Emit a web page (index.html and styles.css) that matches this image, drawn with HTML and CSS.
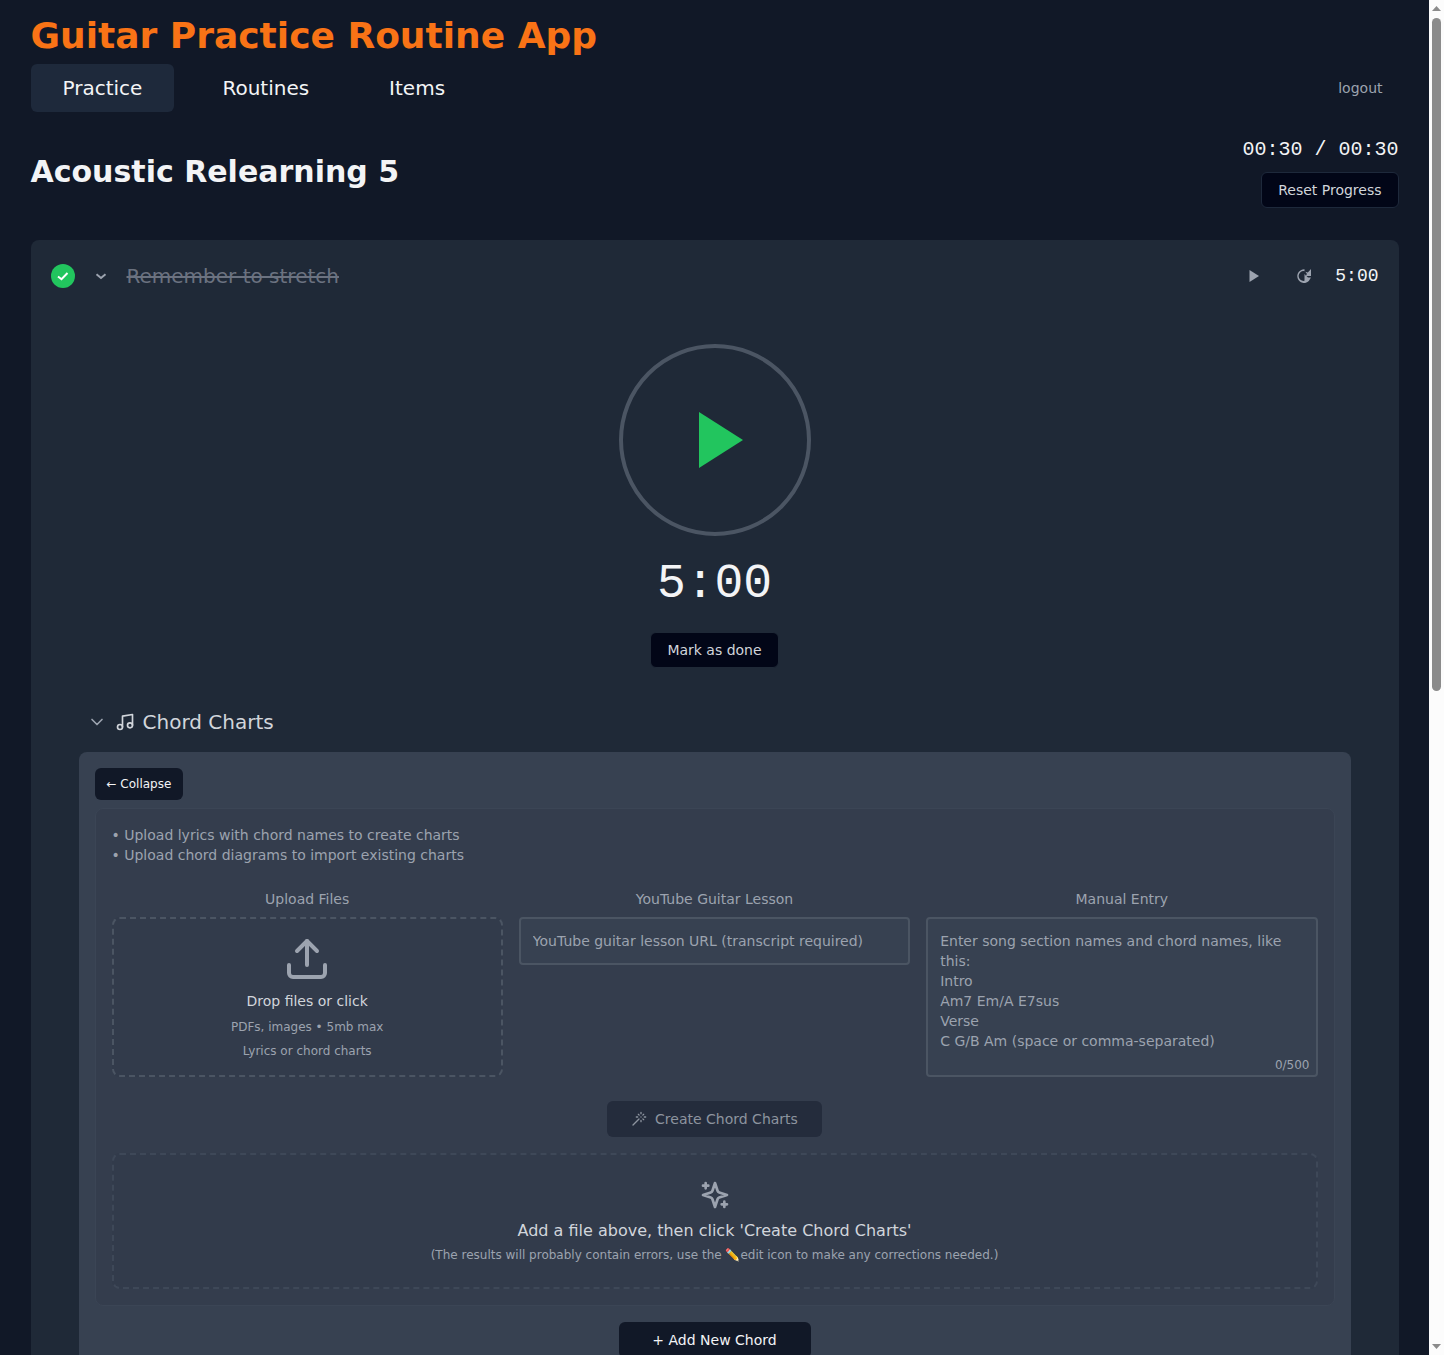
FILE: index.html
```html
<!DOCTYPE html>
<html lang="en">
<head>
<meta charset="utf-8">
<meta name="viewport" content="width=device-width, initial-scale=1">
<title>Guitar Practice Routine App</title>
<link rel="stylesheet" href="styles.css">
</head>
<body>
<div class="scroller">
  <div class="container">
    <header>
      <h1 class="brand">Guitar Practice Routine App</h1>
      <nav class="nav">
        <a class="tab tab-active" href="#practice">Practice</a>
        <a class="tab" href="#routines">Routines</a>
        <a class="tab" href="#items">Items</a>
        <button class="logout" type="button">logout</button>
      </nav>
    </header>

    <main>
      <div class="routine-head">
        <h2 class="routine-title">Acoustic Relearning 5</h2>
        <div class="progress">
          <span class="progress-time">00:30 / 00:30</span>
          <button class="btn btn-dark" type="button">Reset Progress</button>
        </div>
      </div>

      <section class="card">
        <div class="item-row">
          <button class="check" type="button" aria-label="Completed">
            <svg width="16" height="16" viewBox="0 0 16 16" fill="none" stroke="currentColor" stroke-width="2"><path d="M3 8.500 6.500 11.200 12.500 5"/></svg>
          </button>
          <button class="icon-btn" type="button" aria-label="Collapse item">
            <svg width="16" height="16" viewBox="0 0 16 16" fill="none" stroke="currentColor" stroke-width="2"><path d="M3.500 6.300 8 10 12.500 6.300"/></svg>
          </button>
          <h3 class="item-title">Remember to stretch</h3>
          <div class="item-tools">
            <button class="tool" type="button" aria-label="Play">
              <svg width="16" height="16" viewBox="0 0 16 16" fill="currentColor"><path d="M3.500 2v12l9.500-6z"/></svg>
            </button>
            <button class="tool" type="button" aria-label="Reset timer">
              <svg width="16" height="16" viewBox="0 0 16 16" fill="currentColor"><path d="M8.500 1.300A6.800 6.800 0 1 0 12.800 13L15 9.500H12L8.500 6v6.800A4.900 4.900 0 1 1 8.500 3.200zM9.300 3.800 11.800 4.500 15 1v7H9.500l1.500-2z"/></svg>
            </button>
            <span class="item-time">5:00</span>
          </div>
        </div>

        <div class="timer">
          <button class="dial" type="button" aria-label="Start timer">
            <svg width="56" height="56" viewBox="0 0 56 56" fill="currentColor"><path d="M0 0v56l44-28z"/></svg>
          </button>
          <div class="timer-value">5:00</div>
          <button class="btn btn-dark btn-done" type="button">Mark as done</button>
        </div>

        <div class="charts">
          <button class="charts-toggle" type="button" aria-expanded="true">
            <svg class="chevron" width="20" height="20" viewBox="0 0 24 24" fill="none" stroke="currentColor" stroke-width="2" stroke-linecap="round" stroke-linejoin="round"><path d="m6 9 6 6 6-6"/></svg>
            <svg width="20" height="20" viewBox="0 0 24 24" fill="none" stroke="currentColor" stroke-width="2" stroke-linecap="round" stroke-linejoin="round"><path d="M9 18V5l12-2v13"/><circle cx="6" cy="18" r="3"/><circle cx="18" cy="16" r="3"/></svg>
            Chord Charts
          </button>

          <div class="panel">
            <button class="btn-collapse" type="button">← Collapse</button>

            <div class="creator">
              <ul class="hints">
                <li>• Upload lyrics with chord names to create charts</li>
                <li>• Upload chord diagrams to import existing charts</li>
              </ul>

              <div class="sources">
                <div class="source">
                  <label class="source-label" for="files">Upload Files</label>
                  <label class="dropzone" for="files">
                    <svg width="48" height="48" viewBox="0 0 24 24" fill="none" stroke="currentColor" stroke-width="2" stroke-linecap="round" stroke-linejoin="round"><path d="M21 15v4a2 2 0 0 1-2 2H5a2 2 0 0 1-2-2v-4"/><path d="m17 8-5-5-5 5"/><path d="M12 3v12"/></svg>
                    <span class="drop-title">Drop files or click</span>
                    <span class="drop-note">PDFs, images • 5mb max</span>
                    <span class="drop-note">Lyrics or chord charts</span>
                  </label>
                  <input class="file-input" type="file" id="files" multiple>
                </div>
                <div class="source">
                  <label class="source-label" for="video">YouTube Guitar Lesson</label>
                  <input class="field" type="text" id="video" placeholder="YouTube guitar lesson URL (transcript required)">
                </div>
                <div class="source">
                  <label class="source-label" for="manual">Manual Entry</label>
                  <div class="manual">
                    <textarea class="field field-area" id="manual" placeholder="Enter song section names and chord names, like this:&#10;Intro&#10;Am7 Em/A E7sus&#10;Verse&#10;C G/B Am (space or comma-separated)"></textarea>
                    <span class="counter">0/500</span>
                  </div>
                </div>
              </div>

              <button class="btn-create" type="button" disabled>
                <svg width="16" height="16" viewBox="0 0 24 24" fill="none" stroke="currentColor" stroke-width="2" stroke-linecap="round" stroke-linejoin="round"><path d="M15 4V2M15 16v-2M8 9h2M20 9h2M17.800 11.800 19 13M15 9h.01M17.800 6.200 19 5M3 21l9-9M12.200 6.200 11 5"/></svg>
                Create Chord Charts
              </button>

              <div class="results">
                <svg width="32" height="32" viewBox="0 0 24 24" fill="none" stroke="currentColor" stroke-width="2" stroke-linecap="round" stroke-linejoin="round"><path d="m12 3-1.912 5.813a2 2 0 0 1-1.275 1.275L3 12l5.813 1.912a2 2 0 0 1 1.275 1.275L12 21l1.912-5.813a2 2 0 0 1 1.275-1.275L21 12l-5.813-1.912a2 2 0 0 1-1.275-1.275L12 3Z"/><path d="M5 3v4M19 17v4M3 5h4M17 19h4"/></svg>
                <p class="results-title">Add a file above, then click 'Create Chord Charts'</p>
                <p class="results-note">(The results will probably contain errors, use the ✏️edit icon to make any corrections needed.)</p>
              </div>
            </div>

            <button class="btn-add" type="button">+ Add New Chord</button>
          </div>
        </div>
      </section>
    </main>
  </div>
</div>
<div class="scrollbar" aria-hidden="true">
  <svg width="9" height="5" viewBox="0 0 9 5" fill="currentColor"><path d="M0 5h9L4.500 0z"/></svg>
  <div class="track"><div class="thumb"></div></div>
  <svg width="9" height="5" viewBox="0 0 9 5" fill="currentColor"><path d="M0 0h9L4.500 5z"/></svg>
</div>
</body>
</html>
```
FILE: styles.css
```css
* {
  box-sizing: border-box;
}

body {
  display: flex;
  height: 100vh;
  margin: 0;
  background: #111827;
  color: #f3f4f6;
  font-family: "DejaVu Sans", sans-serif;
  font-size: 16px;
  line-height: 24px;
}

h1, h2, h3, p, ul {
  margin: 0;
  padding: 0;
}

ul {
  list-style: none;
}

button, input, textarea {
  font: inherit;
  color: inherit;
}

button {
  border: 0;
  padding: 0;
  background: none;
  cursor: pointer;
}

svg {
  display: block;
  flex-shrink: 0;
}

.scroller {
  flex: 1;
  min-width: 0;
  overflow-y: auto;
  scrollbar-width: none;
}

.scrollbar {
  display: flex;
  flex-direction: column;
  align-items: center;
  gap: 7px;
  width: 15px;
  padding: 6px 0;
  background: #fcfcfc;
  color: #8b8b8b;
}

.track {
  flex: 1;
}

.thumb {
  width: 9px;
  height: 51%;
  border-radius: 5px;
  background: #8b8b8b;
}

.container {
  max-width: 1400px;
  min-height: 195vh;
  margin: 0 auto;
  padding: 16px;
}

.brand {
  margin-bottom: 8px;
  color: #f97316;
  font-size: 36px;
  line-height: 40px;
  font-weight: 700;
}

.nav {
  display: flex;
  align-items: center;
  gap: 16px;
}

.tab {
  padding: 10px 32px;
  border-radius: 6px;
  color: #f3f4f6;
  font-size: 20px;
  line-height: 28px;
  text-decoration: none;
}

.tab-active {
  background: #1e293b;
}

.logout {
  margin-left: auto;
  padding: 8px 16px;
  color: #9ca3af;
  font-size: 14px;
  line-height: 20px;
}

.routine-head {
  display: flex;
  align-items: center;
  justify-content: space-between;
  margin: 24px 0 32px;
}

.routine-title {
  font-size: 30px;
  line-height: 36px;
  font-weight: 700;
}

.progress {
  display: flex;
  flex-direction: column;
  align-items: flex-end;
  gap: 8px;
}

.progress-time, .item-time, .timer-value {
  font-family: "Liberation Mono", monospace;
}

.progress-time {
  font-size: 20px;
  line-height: 28px;
}

.btn {
  padding: 7px 16px;
  border: 1px solid #1e293b;
  border-radius: 6px;
  font-size: 14px;
  line-height: 20px;
}

.btn-dark {
  background: #020617;
  color: #d1d5db;
}

.btn-done {
  border-color: #1f2937;
}

.card {
  border-radius: 8px;
  background: #1f2937;
}

.item-row {
  display: flex;
  align-items: center;
  gap: 8px;
  min-height: 72px;
  padding: 16px 20px;
}

.check {
  display: grid;
  place-items: center;
  width: 24px;
  height: 24px;
  border-radius: 50%;
  background: #22c55e;
  color: #ffffff;
}

.icon-btn {
  display: grid;
  place-items: center;
  width: 36px;
  height: 36px;
  color: #9ca3af;
}

.item-title {
  color: #6b7280;
  font-size: 20px;
  line-height: 28px;
  font-weight: 400;
  text-decoration: line-through;
}

.item-tools {
  display: flex;
  align-items: center;
  gap: 12px;
  margin-left: auto;
}

.tool {
  display: grid;
  place-items: center;
  width: 38px;
  height: 36px;
  color: #9ca3af;
}

.item-time {
  font-size: 18px;
  line-height: 28px;
}

.timer {
  display: flex;
  flex-direction: column;
  align-items: center;
  gap: 24px;
  padding-top: 32px;
}

.dial {
  display: grid;
  place-items: center;
  width: 192px;
  height: 192px;
  padding-left: 24px;
  border: 4px solid #4b5563;
  border-radius: 50%;
  color: #22c55e;
}

.timer-value {
  font-size: 48px;
  line-height: 48px;
}

.charts {
  padding: 40px 48px 48px;
}

.charts-toggle {
  display: flex;
  align-items: center;
  gap: 8px;
  margin-bottom: 16px;
  padding-left: 8px;
  color: #d1d5db;
  font-size: 20px;
  line-height: 28px;
}

.chevron {
  color: #9ca3af;
}

.panel {
  display: flex;
  flex-direction: column;
  align-items: center;
  padding: 16px;
  border-radius: 8px;
  background: #374151;
}

.btn-collapse {
  align-self: flex-start;
  margin-bottom: 8px;
  padding: 8px 12px;
  border-radius: 6px;
  background: #111827;
  font-size: 12px;
  line-height: 16px;
}

.creator {
  display: flex;
  flex-direction: column;
  align-items: center;
  align-self: stretch;
  margin-bottom: 16px;
  padding: 16px;
  border: 1px solid #3b4555;
  border-radius: 8px;
  background: #343d4d;
}

.hints {
  align-self: stretch;
  margin-bottom: 24px;
  color: #9ca3af;
  font-size: 14px;
  line-height: 20px;
}

.sources {
  display: grid;
  grid-template-columns: repeat(3, 1fr);
  align-self: stretch;
  gap: 16px;
  margin-bottom: 24px;
}

.source {
  display: flex;
  flex-direction: column;
  gap: 8px;
}

.source-label {
  color: #9ca3af;
  font-size: 14px;
  line-height: 20px;
  text-align: center;
}

.dropzone {
  display: flex;
  flex-direction: column;
  align-items: center;
  gap: 8px;
  padding: 16px;
  border: 2px dashed #4b5563;
  border-radius: 8px;
  background: #323b4b;
  color: #9ca3af;
  cursor: pointer;
}

.drop-title {
  color: #d1d5db;
  font-size: 14px;
  line-height: 20px;
}

.drop-note {
  font-size: 12px;
  line-height: 16px;
}

.file-input {
  display: none;
}

.field {
  width: 100%;
  height: 48px;
  padding: 12px;
  border: 2px solid #4b5563;
  border-radius: 4px;
  outline: 0;
  background: #374151;
  font-size: 14px;
  line-height: 20px;
}

.field::placeholder {
  color: #9ca3af;
  opacity: 1;
}

.manual {
  position: relative;
}

.field-area {
  display: block;
  height: 160px;
  resize: none;
}

.counter {
  position: absolute;
  right: 8px;
  bottom: 4px;
  color: #9ca3af;
  font-size: 12px;
  line-height: 16px;
}

.btn-create {
  display: flex;
  align-items: center;
  gap: 8px;
  margin-bottom: 16px;
  padding: 8px 24px;
  border-radius: 6px;
  background: #242c3c;
  color: #8d949f;
  font-size: 14px;
  line-height: 20px;
}

.results {
  display: flex;
  flex-direction: column;
  align-items: center;
  align-self: stretch;
  padding: 24px;
  border: 2px dashed #3e4858;
  border-radius: 8px;
  background: #323b4b;
  color: #9ca3af;
}

.results-title {
  margin: 8px 0 4px;
  color: #d1d5db;
}

.results-note {
  font-size: 12px;
  line-height: 16px;
}

.btn-add {
  width: 192px;
  padding: 8px 16px;
  border-radius: 6px;
  background: #111827;
  font-size: 14px;
  line-height: 20px;
}
```
